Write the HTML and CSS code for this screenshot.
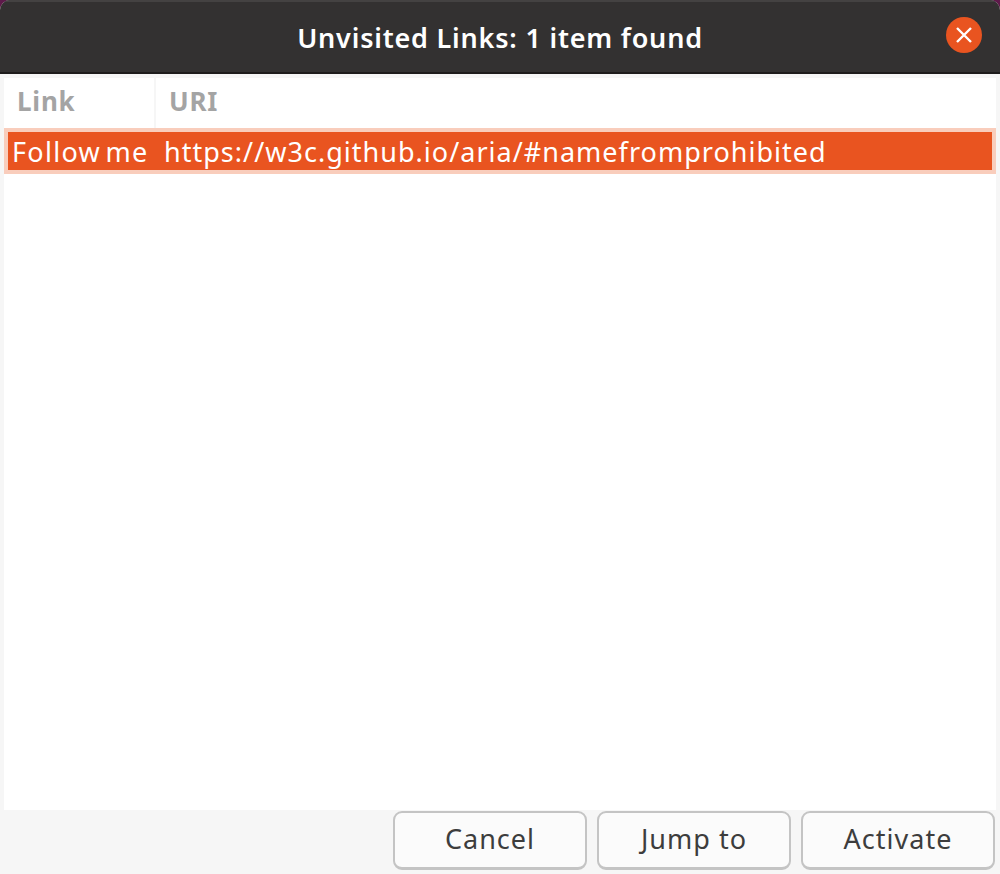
FILE: index.html
```html
<!DOCTYPE html>
<html lang="en">

<head>
    <meta charset="UTF-8">
    <meta name="viewport" content="width=device-width, initial-scale=1.0">
    <title>Unvisited Links</title>
    <link rel="stylesheet" href="styles.css">
</head>

<body>
    <div class="dialog">
        <header class="titlebar">
            <h1 class="title">Unvisited Links: 1 item found</h1>
            <button class="close-btn" aria-label="Close">
                <svg width="20" height="20" viewBox="0 0 20 20">
                    <path d="M3 3 L17 17 M17 3 L3 17" stroke="#fff" stroke-width="2.4" fill="none"/>
                </svg>
            </button>
        </header>

        <main class="content">
            <div class="list">
                <div class="list-head">
                    <div class="col-link">Link</div>
                    <div class="col-uri">URI</div>
                </div>
                <div class="list-row">
                    <div class="row-inner">
                        <span class="cell-link">Follow me</span>
                        <span class="cell-uri">https://w3c.github.io/aria/#namefromprohibited</span>
                    </div>
                </div>
            </div>
        </main>

        <footer class="actions">
            <button class="btn">Cancel</button>
            <button class="btn">Jump to</button>
            <button class="btn">Activate</button>
        </footer>
    </div>
</body>

</html>
```

FILE: styles.css
```css
html, body {
    margin: 0;
    padding: 0;
    height: 874px;
    overflow: hidden;
}

body {
    background-color: #5e1a4a;
    font-family: "Noto Sans", sans-serif;
}

.dialog {
    display: flex;
    flex-direction: column;
    height: 874px;
    background-color: #f6f6f6;
    border-radius: 10px 10px 0 0;
    overflow: hidden;
}

.titlebar {
    display: flex;
    align-items: center;
    justify-content: center;
    position: relative;
    box-sizing: border-box;
    height: 74px;
    background-color: #333131;
    border-top: 2px solid #444242;
    border-bottom: 2px solid #1e1c1c;
}

.title {
    margin: 0;
    font-size: 27px;
    font-weight: 600;
    letter-spacing: 0.8px;
    color: #ffffff;
}

/* sits on top of the bar so the title stays centred */
.close-btn {
    position: absolute;
    top: 15px;
    right: 18px;
    display: flex;
    align-items: center;
    justify-content: center;
    width: 36px;
    height: 36px;
    padding: 0;
    border: none;
    border-radius: 50%;
    background-color: #e95420;
}

.content {
    flex: 1;
    display: flex;
    padding: 4px 4px 0 4px;
    min-height: 0;
}

.list {
    flex: 1;
    background-color: #ffffff;
}

.list-head {
    display: flex;
    height: 50px;
    font-size: 26px;
    font-weight: 700;
    letter-spacing: 0.8px;
    color: #a4a4a4;
}

.col-link {
    box-sizing: border-box;
    width: 152px;
    padding: 5px 0 0 13px;
    border-right: 2px solid #f6f6f6;
}

.col-uri {
    padding: 5px 0 0 13px;
}

.list-row {
    padding: 4px;
    background-color: #f9cdbc;
}

.row-inner {
    display: flex;
    align-items: center;
    height: 38px;
    background-color: #e95420;
    color: #ffffff;
    font-size: 27px;
}

.cell-link {
    width: 156px;
    padding-left: 4px;
    box-sizing: border-box;
    white-space: nowrap;
    letter-spacing: 1.3px;
    word-spacing: -4px;
}

.cell-uri {
    white-space: nowrap;
    letter-spacing: 1.02px;
}

.actions {
    display: flex;
    justify-content: flex-end;
    gap: 10px;
    padding: 1px 5px 4px 0;
}

.btn {
    box-sizing: border-box;
    width: 194px;
    height: 59px;
    padding: 0 0 4px 0;
    border: 2px solid #c4c4c4;
    border-bottom-width: 3px;
    border-radius: 9px;
    background-color: #fbfbfb;
    color: #3d3d3d;
    font-family: "Noto Sans", sans-serif;
    font-size: 27px;
    letter-spacing: 1px;
}
```
